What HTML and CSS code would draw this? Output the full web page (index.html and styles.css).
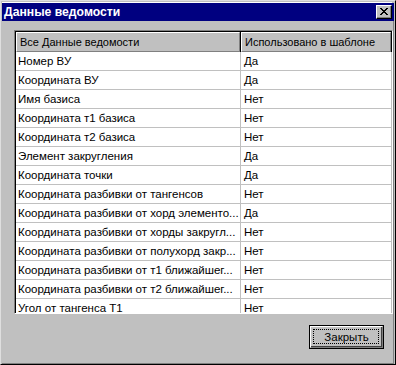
FILE: index.html
```html
<!DOCTYPE html>
<html lang="ru">
<head>
    <meta charset="utf-8">
    <title>Данные ведомости</title>
    <link rel="stylesheet" href="styles.css">
</head>
<body>
    <div class="window">
        <div class="titlebar">
            <span class="title">Данные ведомости</span>
            <span class="close-btn">
                <svg width="8" height="7" viewBox="0 0 8 7">
                    <path d="M0 0h2v1h1v1h2v-1h1v-1h2v1h-1v1h-1v1h-1v1h1v1h1v1h1v1h-2v-1h-1v-1h-2v1h-1v1h-2v-1h1v-1h1v-1h1v-1h-1v-1h-1v-1h-1z" fill="#000"/>
                </svg>
            </span>
        </div>
        <div class="client">
            <div class="listview">
                <div class="lv-head">
                    <div class="hcell col1">Все Данные ведомости</div>
                    <div class="hcell col2">Использовано в шаблоне</div>
                </div>
                <div class="lv-body">
                    <div class="row"><div class="cell col1">Номер ВУ</div><div class="cell col2">Да</div></div>
                    <div class="row"><div class="cell col1">Координата ВУ</div><div class="cell col2">Да</div></div>
                    <div class="row"><div class="cell col1">Имя базиса</div><div class="cell col2">Нет</div></div>
                    <div class="row"><div class="cell col1">Координата т1 базиса</div><div class="cell col2">Нет</div></div>
                    <div class="row"><div class="cell col1">Координата т2 базиса</div><div class="cell col2">Нет</div></div>
                    <div class="row"><div class="cell col1">Элемент закругления</div><div class="cell col2">Да</div></div>
                    <div class="row"><div class="cell col1">Координата точки</div><div class="cell col2">Да</div></div>
                    <div class="row"><div class="cell col1">Координата разбивки от тангенсов</div><div class="cell col2">Нет</div></div>
                    <div class="row"><div class="cell col1">Координата разбивки от хорд элементо...</div><div class="cell col2">Да</div></div>
                    <div class="row"><div class="cell col1">Координата разбивки от хорды закругл...</div><div class="cell col2">Нет</div></div>
                    <div class="row"><div class="cell col1">Координата разбивки от полухорд закр...</div><div class="cell col2">Нет</div></div>
                    <div class="row"><div class="cell col1">Координата разбивки от т1 ближайшег...</div><div class="cell col2">Нет</div></div>
                    <div class="row"><div class="cell col1">Координата разбивки от т2 ближайшег...</div><div class="cell col2">Нет</div></div>
                    <div class="row"><div class="cell col1">Угол от тангенса Т1</div><div class="cell col2">Нет</div></div>
                </div>
            </div>
            <div class="buttons">
                <div class="btn default"><span class="focus">Закрыть</span></div>
            </div>
        </div>
    </div>
</body>
</html>
```

FILE: styles.css
```css
body {
    margin: 0;
    background-color: #c0c0c0;
    font-family: "Liberation Sans", Arial, sans-serif;
    font-size: 11px;
    color: #000;
}

.window {
    width: 396px;
    height: 365px;
    box-sizing: border-box;
    border: 1px solid;
    border-color: #dfdfdf #000 #000 #dfdfdf;
    background-color: #c0c0c0;
    display: flex;
    flex-direction: column;
}

.window > .titlebar,
.window > .client {
    margin: 0 1px;
}

.titlebar {
    margin-top: 2px !important;
    height: 18px;
    background-color: #000080;
    color: #fff;
    display: flex;
    align-items: center;
    justify-content: space-between;
    padding: 0 2px;
    box-shadow: -1px -2px 0 -1px #fff;
}

.title {
    font-weight: bold;
    font-size: 12.2px;
}

.close-btn {
    width: 16px;
    height: 14px;
    box-sizing: border-box;
    background-color: #c0c0c0;
    border: 1px solid;
    border-color: #fff #000 #000 #fff;
    box-shadow: inset -1px -1px 0 #808080;
    display: flex;
    align-items: center;
    justify-content: center;
}

.close-btn svg {
    display: block;
    margin: 0 1px 1px 0;
}

.client {
    flex: 1;
    display: flex;
    flex-direction: column;
    padding: 9px 0 0 12px;
    border-right: 1px solid #808080;
    border-bottom: 1px solid #808080;
}

.listview {
    height: 284px;
    box-sizing: border-box;
    border: 1px solid;
    border-color: #808080 #fff #fff #808080;
    background-color: #fff;
    overflow: hidden;
}

.lv-head {
    display: flex;
    height: 20px;
    border-top: 1px solid #000;
    border-left: 1px solid #000;
}

.hcell {
    box-sizing: border-box;
    height: 20px;
    line-height: 18px;
    padding-left: 3px;
    background-color: #c0c0c0;
    border: 1px solid;
    border-color: #fff #808080 #808080 #fff;
    box-shadow: 1px 0 0 #000;
    white-space: nowrap;
}

.col1 {
    width: 224px;
}

.col2 {
    width: 150px;
}

.hcell.col2 {
    margin-left: 1px;
}

.lv-body {
    border-left: 1px solid #000;
}

.row {
    display: flex;
    height: 19px;
    box-sizing: border-box;
    border-bottom: 1px solid #c0c0c0;
}

.cell {
    box-sizing: border-box;
    line-height: 18px;
    font-size: 11.5px;
    padding-left: 2px;
    white-space: nowrap;
    overflow: hidden;
}

.cell.col1 {
    width: 225px;
    border-right: 1px solid #c0c0c0;
}

.cell.col2 {
    width: 151px;
    border-right: 1px solid #c0c0c0;
    padding-left: 3px;
}

.buttons {
    display: flex;
    justify-content: flex-end;
    padding: 11px 9px 0 0;
}

.btn {
    width: 75px;
    height: 24px;
    box-sizing: border-box;
    border: 1px solid #000;
    display: flex;
}

.btn .focus {
    flex: 1;
    border: 1px solid;
    border-color: #fff #808080 #808080 #fff;
    box-shadow: inset -1px -1px 0 #404040;
    display: flex;
    align-items: center;
    justify-content: center;
    font-size: 11.5px;
    position: relative;
}

.btn .focus::after {
    content: "";
    position: absolute;
    left: 2px;
    top: 2px;
    right: 3px;
    bottom: 3px;
    border: 1px dotted #000;
}
```
